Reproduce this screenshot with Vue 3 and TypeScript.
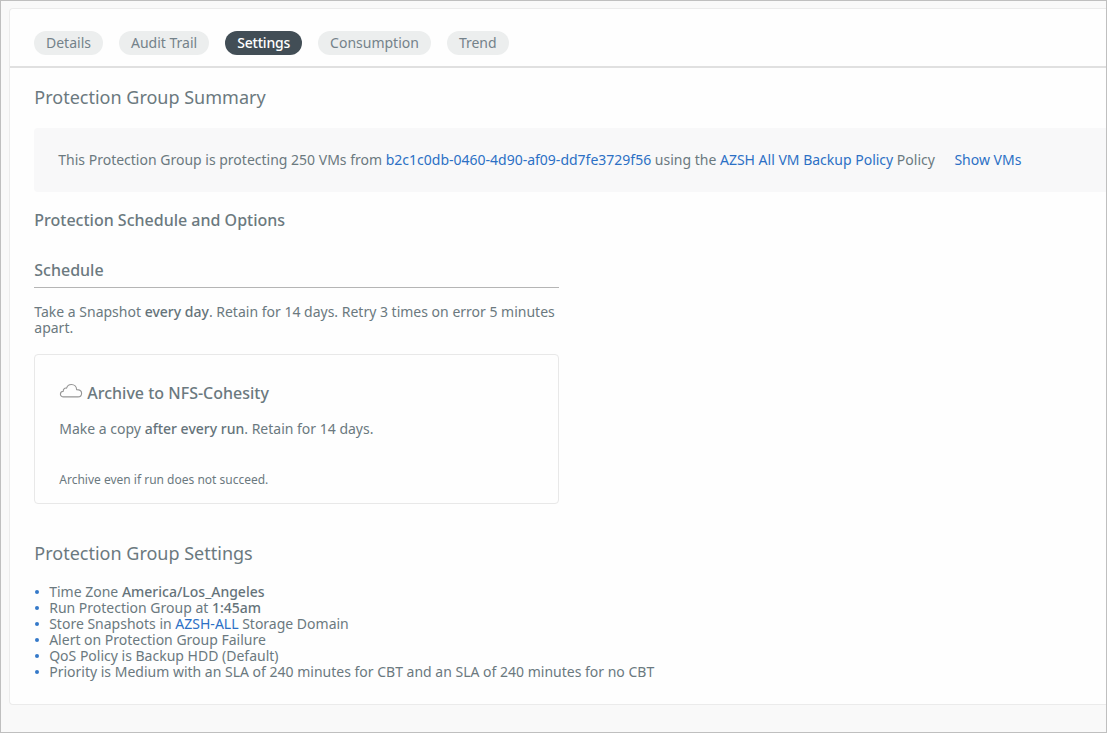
<script setup lang="ts">
import { ref } from 'vue'

interface Part {
  text: string
  kind?: 'strong' | 'link'
}

const tabs: string[] = ['Details', 'Audit Trail', 'Settings', 'Consumption', 'Trend']
const active = ref<string>('Settings')

const settings: Part[][] = [
  [{ text: 'Time Zone ' }, { text: 'America/Los_Angeles', kind: 'strong' }],
  [{ text: 'Run Protection Group at ' }, { text: '1:45am', kind: 'strong' }],
  [{ text: 'Store Snapshots in ' }, { text: 'AZSH-ALL', kind: 'link' }, { text: ' Storage Domain' }],
  [{ text: 'Alert on Protection Group Failure' }],
  [{ text: 'QoS Policy is Backup HDD (Default)' }],
  [{ text: 'Priority is Medium with an SLA of 240 minutes for CBT and an SLA of 240 minutes for no CBT' }],
]
</script>

<template>
  <div class="page">
    <main class="panel">
      <nav class="tabs">
        <button
          v-for="tab in tabs"
          :key="tab"
          type="button"
          class="tab"
          :class="{ active: tab === active }"
          @click="active = tab"
        >{{ tab }}</button>
      </nav>

      <div class="content">
        <h2 class="title">Protection Group Summary</h2>
        <div class="summary">
          <span>This Protection Group is protecting 250 VMs from <a class="link">b2c1c0db-0460-4d90-af09-dd7fe3729f56</a> using the <a class="link">AZSH All VM Backup Policy</a> Policy</span>
          <a class="link show">Show VMs</a>
        </div>

        <h3 class="subtitle options">Protection Schedule and Options</h3>
        <section class="schedule">
          <h3 class="subtitle ruled">Schedule</h3>
          <p class="snapshot">Take a Snapshot <b>every day</b>. Retain for 14 days. Retry 3 times on error 5 minutes apart.</p>
          <div class="archive">
            <h3 class="subtitle archive-title">
              <svg class="cloud" width="24" height="16" viewBox="0 0 24 16" fill="none" stroke="#959595" stroke-width="1.1" stroke-linejoin="round">
                <path d="M4.6 13.9C2.7 13.9 1.4 12.8 1.4 11.2C1.4 9.6 2.6 8.5 4.3 8.3C4 6.3 5.5 4.7 7.6 5.1C8.3 2.7 10.2 1.5 12.4 1.5C15.4 1.5 17.5 3.7 17.6 6.6C20.7 6.5 22.6 8 22.6 10.2C22.6 12.4 21.1 13.9 18.9 13.9Z" />
              </svg>
              <span>Archive to NFS-Cohesity</span>
            </h3>
            <p class="copy">Make a copy <b>after every run</b>. Retain for 14 days.</p>
            <p class="note">Archive even if run does not succeed.</p>
          </div>
        </section>

        <h2 class="title settings-title">Protection Group Settings</h2>
        <ul class="settings">
          <li v-for="(item, i) in settings" :key="i"><span v-for="(part, j) in item" :key="j" :class="part.kind">{{ part.text }}</span></li>
        </ul>
      </div>
    </main>
  </div>
</template>

<style>
body {
  margin: 0;
  overflow: hidden;
}
</style>

<style scoped>
.page {
  box-sizing: border-box;
  width: 1107px;
  height: 733px;
  padding: 7px 0 0 8px;
  border: 1px solid #bfbfbf;
  background: #f9f9f9;
  overflow: hidden;
  font-family: 'Noto Sans', 'Open Sans', sans-serif;
  font-size: 14px;
  line-height: 16px;
  color: #6b797f;
}
.panel {
  box-sizing: border-box;
  height: 697px;
  background: #fefefe;
  border: 1px solid #ebebeb;
  border-right: 0;
  border-radius: 4px 0 0 4px;
}
.tabs {
  box-sizing: border-box;
  display: flex;
  gap: 16px;
  height: 59px;
  padding: 22px 24px 0;
  border-bottom: 2px solid #e0e0e0;
}
.tab {
  height: 24px;
  padding: 0 12px;
  border: 0;
  border-radius: 12px;
  background: #eceeee;
  color: #74828a;
  font: inherit;
  line-height: 24px;
  white-space: nowrap;
}
.tab.active {
  background: #424e56;
  color: #fff;
  font-weight: 500;
  letter-spacing: -0.2px;
}
.content {
  padding: 17px 0 0 24.3px;
}
h2,
h3,
p,
ul {
  margin: 0;
}
b,
.strong {
  font-weight: 500;
  color: #65737a;
}
.link {
  color: #2c70c5;
}
.title {
  font-size: 18px;
  font-weight: 400;
  line-height: 24px;
}
.subtitle {
  font-size: 16px;
  font-weight: 500;
  line-height: 24px;
}
.summary {
  display: flex;
  align-items: center;
  gap: 19.5px;
  height: 64px;
  margin-top: 19px;
  padding-left: 24px;
  background: #f8f8f9;
  border-radius: 4px 0 0 4px;
  white-space: nowrap;
}
.options {
  margin-top: 16px;
}
.schedule {
  width: 525px;
}
.ruled {
  margin-top: 26px;
  padding-bottom: 5px;
  border-bottom: 1px solid #b5b5b5;
}
.snapshot {
  margin-top: 16px;
}
.archive {
  box-sizing: border-box;
  height: 150px;
  margin-top: 18px;
  padding: 26px 24px 0;
  border: 1px solid #e8e8e8;
  border-radius: 4px;
}
.archive-title {
  display: flex;
  gap: 4px;
}
.cloud {
  margin-top: 2px;
}
.copy {
  margin-top: 16px;
}
.note {
  margin-top: 35px;
  font-size: 12px;
}
.settings-title {
  margin-top: 37px;
}
.settings {
  margin-top: 19px;
  padding: 0;
  list-style: none;
}
.settings li {
  display: flex;
  align-items: center;
  height: 16px;
  white-space: pre;
}
.settings li::before {
  content: '';
  width: 4px;
  height: 4px;
  margin: 0 10.2px 0 0.7px;
  border-radius: 50%;
  background: #3479c9;
}
</style>
